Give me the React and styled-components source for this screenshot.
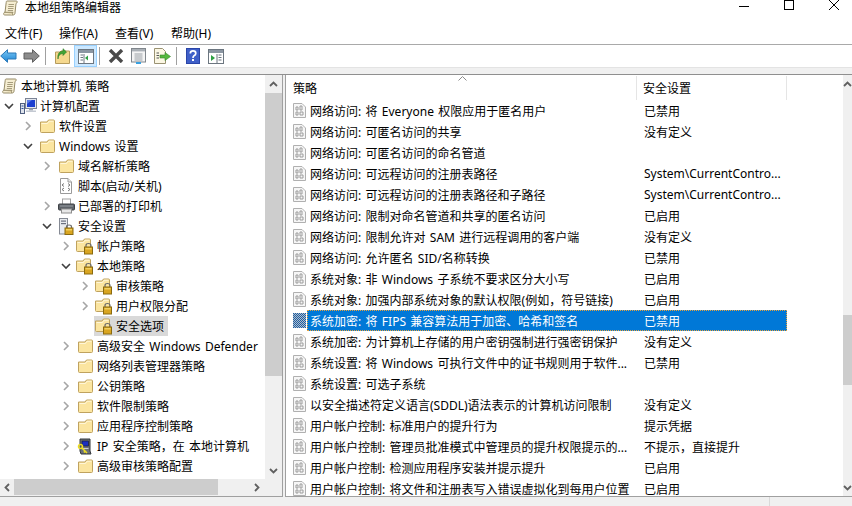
import React from 'react';
import styled, { createGlobalStyle } from 'styled-components';

const Global = createGlobalStyle`
    html, body {
        margin: 0;
        padding: 0;
        background: #fff;
    }
    * {
        box-sizing: border-box;
    }
`;

const Win = styled.div`
    width: 852px;
    height: 506px;
    overflow: hidden;
    display: flex;
    flex-direction: column;
    background: #fff;
    color: #000;
    font-family: 'Noto Sans', 'Noto Sans CJK SC', sans-serif;
    font-size: 12px;
    word-spacing: 1.2px;
`;

const TitleBar = styled.div`
    height: 15px;
    display: flex;
    align-items: center;
    padding-left: 3px;
    flex: none;
`;

const TitleText = styled.div`
    margin-left: 7px;
    line-height: 15px;
`;

const WinButtons = styled.div`
    margin-left: auto;
    display: flex;
    align-items: flex-start;
    height: 15px;
    padding-right: 13px;
    gap: 35px;
`;

const MenuBar = styled.div`
    flex: none;
    display: flex;
    align-items: center;
    padding: 6px 0 0 5px;
    border-bottom: 1px solid #a9a9a9;
    box-sizing: content-box;
    height: 23px;
`;

const MenuItem = styled.span`
    width: ${(p) => p.$w}px;
    white-space: nowrap;
`;

const Toolbar = styled.div`
    height: 22px;
    flex: none;
    display: flex;
    align-items: center;
`;

const Tool = styled.div`
    height: 22px;
    width: ${(p) => p.$w}px;
    margin-left: ${(p) => p.$ml || 0}px;
    display: flex;
    align-items: center;
    justify-content: center;
    background: ${(p) => (p.$on ? '#cce8ff' : 'transparent')};
    border: ${(p) => (p.$on ? '1px solid #99d1ff' : 'none')};
`;

const ToolSep = styled.div`
    width: 1px;
    height: 18px;
    margin-left: ${(p) => p.$ml || 0}px;
    background: #a0a0a0;
`;

const Band = styled.div`
    flex: none;
    background: #f0f0f0;
    border-top: 1px solid #e3e3e3;
    border-bottom: 1px solid #8f8f8f;
    box-sizing: content-box;
    height: 6px;
`;

const Panes = styled.div`
    flex: 1;
    min-height: 0;
    display: flex;
    background: #f0f0f0;
`;

const LeftPane = styled.div`
    width: 282px;
    flex: none;
    display: grid;
    grid-template-columns: 265px 17px;
    grid-template-rows: 404px 16px;
    height: 421px;
    background: #f0f0f0;
    border-right: 1px solid #a0a0a0;
    border-bottom: 1px solid #a0a0a0;
    box-sizing: content-box;
`;

const Tree = styled.div`
    overflow: hidden;
    background: #fff;
    padding-top: 1px;
`;

const TreeRow = styled.div`
    height: 20px;
    display: flex;
    align-items: center;
    padding-left: ${(p) => p.$level * 19}px;
    white-space: nowrap;
`;

const Caret = styled.div`
    width: 18px;
    height: 20px;
    flex: none;
    display: flex;
    align-items: center;
    justify-content: center;
`;

const TreeLabel = styled.div`
    display: flex;
    align-items: center;
    height: 20px;
    padding-right: 4px;
    background: ${(p) => (p.$sel ? '#d9d9d9' : 'transparent')};
`;

const TreeIcon = styled.div`
    width: ${(p) => p.$w || 20}px;
    height: 20px;
    margin-right: ${(p) => p.$mr || 2}px;
    flex: none;
    display: flex;
    align-items: center;
    justify-content: center;
`;

const VScroll = styled.div`
    background: #f0f0f0;
    display: flex;
    flex-direction: column;
    align-items: stretch;
    height: 100%;
`;

const ScrollArrow = styled.div`
    height: ${(p) => p.$h || 17}px;
    flex: none;
    display: flex;
    align-items: center;
    justify-content: center;
`;

const VThumb = styled.div`
    height: ${(p) => p.$h}px;
    margin-top: ${(p) => p.$top}px;
    flex: none;
    background: #cdcdcd;
`;

const Spacer = styled.div`
    flex: 1;
`;

const HScroll = styled.div`
    grid-column: 1 / 3;
    display: flex;
    align-items: stretch;
    background: #f0f0f0;
    padding-right: 19px;
`;

const HArrow = styled.div`
    width: 14px;
    flex: none;
    display: flex;
    align-items: center;
    justify-content: center;
`;

const HThumb = styled.div`
    width: 204px;
    flex: none;
    background: #cdcdcd;
`;

const Gap = styled.div`
    width: 2px;
    flex: none;
`;

const RightPane = styled.div`
    flex: 1;
    min-width: 0;
    height: 421px;
    display: flex;
    background: #fff;
    border-left: 1px solid #a0a0a0;
    border-bottom: 1px solid #a0a0a0;
    box-sizing: content-box;
`;

const ListArea = styled.div`
    flex: 1;
    min-width: 0;
    overflow: hidden;
`;

const HeaderRow = styled.div`
    position: relative;
    height: 25px;
    display: flex;
    align-items: center;
`;

const HeadCell = styled.div`
    width: ${(p) => p.$w}px;
    height: 24px;
    flex: none;
    padding-left: ${(p) => p.$pl}px;
    line-height: 26px;
    border-right: 1px solid #e5e5e5;
`;

const SortMark = styled.svg`
    position: absolute;
    left: 172px;
    top: 1px;
`;

const ListRow = styled.div`
    height: 21px;
    display: flex;
    align-items: center;
    white-space: nowrap;
`;

const RowIcon = styled.div`
    width: 21px;
    height: 21px;
    flex: none;
    display: flex;
    align-items: center;
    justify-content: flex-end;
    padding-right: 1px;
`;

const RowBody = styled.div`
    width: 480px;
    height: 21px;
    flex: none;
    display: flex;
    align-items: center;
    background: ${(p) => (p.$sel ? '#0078d7' : 'transparent')};
    color: ${(p) => (p.$sel ? '#fff' : '#000')};
    outline: ${(p) => (p.$sel ? '1px dotted #e8a33d' : 'none')};
    outline-offset: -1px;
`;

const PolicyCell = styled.div`
    width: 337px;
    flex: none;
    padding-left: 3px;
    overflow: hidden;
`;

const ValueCell = styled.div`
    flex: 1;
`;

const StatusBar = styled.div`
    flex: none;
    height: 9px;
    display: flex;
    justify-content: flex-end;
    background: #f0f0f0;
`;

const StatusCell = styled.div`
    width: 83px;
    border-left: 1px solid #d9d9d9;
`;

const Chevron = ({ open }) => (
    <svg width="10" height="10" viewBox="0 0 10 10">
        <path
            d={open ? 'M1 3 L5 7 L9 3' : 'M3 1 L7 5 L3 9'}
            fill="none"
            stroke={open ? '#404040' : '#a6a6a6'}
            strokeWidth="1.6"
        />
    </svg>
);

const ScrollChevron = ({ dir }) => {
    const paths = {
        up: 'M1 6 L4.5 2.5 L8 6',
        down: 'M1 3 L4.5 6.5 L8 3',
        left: 'M6 1 L2.5 4.5 L6 8',
        right: 'M3 1 L6.5 4.5 L3 8',
    };
    return (
        <svg width="9" height="9" viewBox="0 0 9 9">
            <path d={paths[dir]} fill="none" stroke="#606060" strokeWidth="1.8" />
        </svg>
    );
};

const ScrollIcon = () => (
    <svg width="15" height="16" viewBox="0 0 15 16">
        <path d="M4 1 H13.5 C14.5 1 14.5 3 13 3.5 L12 13 C12 14.5 11 15 10 15 H1.5 C.3 15 .3 12.3 2 12.3 L3.2 2.5 C3.3 1.5 3.5 1 4 1Z" fill="#f6eed2" stroke="#968b68" />
        <path d="M5.5 4.5 H11 M5.2 6.5 H10.7 M5 8.5 H10.5 M4.8 10.5 H10" stroke="#a69c7c" />
        <path d="M1.5 12.3 H10 C9 13.3 9.2 14.5 10 15" fill="#e8dcb4" stroke="#968b68" />
    </svg>
);

const ComputerIcon = () => (
    <svg width="17" height="16" viewBox="0 0 17 16">
        <rect x="5.5" y=".5" width="11" height="10" fill="#e3e7ee" stroke="#7c8496" />
        <rect x="7" y="2" width="8" height="7" fill="#1c3fd0" />
        <path d="M7 2 H12 L7 6Z" fill="#5c7ce8" />
        <rect x="9" y="10.5" width="4" height="2" fill="#9aa2b0" />
        <rect x="6" y="12.5" width="10" height="1.5" fill="#c4c9d2" />
        <rect x=".5" y="5.5" width="4" height="10" fill="#dfe4ec" stroke="#4f5f80" />
        <rect x="1.5" y="7.5" width="2" height="1" fill="#2a4fa0" />
        <rect x="1.5" y="10" width="2" height="1" fill="#2a4fa0" />
    </svg>
);

const FolderShape = () => (
    <>
        <path d="M.5 3 H7 L8.5 1 H13.5 Q14.5 1 14.5 2 V12.5 Q14.5 13.5 13.5 13.5 H1.5 Q.5 13.5 .5 12.5Z" fill="#fbe5a0" stroke="#bfa25e" />
        <path d="M1.5 4.5 H7.5 L9 2.2 H13.5" fill="none" stroke="#fff6d8" />
    </>
);

const Folder = () => (
    <svg width="15" height="14" viewBox="0 0 15 14">
        <FolderShape />
    </svg>
);

const LockFolder = () => (
    <svg width="18" height="17" viewBox="0 0 18 17">
        <FolderShape />
        <path d="M10 9 V7.5 Q10 5.5 12.5 5.5 Q15 5.5 15 7.5 V9" fill="none" stroke="#6b6b6b" strokeWidth="1.2" />
        <rect x="8.5" y="9" width="8" height="7" fill="#d9a520" stroke="#8a6a10" />
        <rect x="9.5" y="10" width="6" height="1.5" fill="#f2d060" />
    </svg>
);

const ScriptIcon = () => (
    <svg width="14" height="16" viewBox="0 0 14 16">
        <path d="M1.5 .5 H9 L12.5 4 V15.5 H1.5Z" fill="#fff" stroke="#9a9a9a" />
        <path d="M9 .5 V4 H12.5" fill="#eee" stroke="#9a9a9a" />
        <path d="M5 5.5 L3 7 L5 8.5 M9 5.5 L11 7 L9 8.5 M5 10 L3 11.5 L5 13 M9 10 L11 11.5 L9 13" fill="none" stroke="#777" />
    </svg>
);

const PrinterIcon = () => (
    <svg width="17" height="16" viewBox="0 0 17 16">
        <rect x="4.5" y="1" width="8" height="6" fill="#fff" stroke="#a0a0a0" />
        <rect x=".5" y="6" width="16" height="6" rx="1" fill="#5e6369" stroke="#3e4247" />
        <rect x="2" y="7.5" width="13" height="1" fill="#9aa0a6" />
        <rect x="3.5" y="11" width="10" height="4" fill="#e8e8e8" stroke="#8e8e8e" />
    </svg>
);

const SecurityIcon = () => (
    <svg width="16" height="17" viewBox="0 0 16 17">
        <rect x="1.5" y=".5" width="8" height="15.5" fill="#e8ebef" stroke="#858a94" />
        <rect x="3" y="2.5" width="5" height="1.2" fill="#6a7080" />
        <rect x="3" y="5" width="5" height="1.2" fill="#6a7080" />
        <path d="M8.5 10 V8.7 Q8.5 7 11 7 Q13.5 7 13.5 8.7 V10" fill="none" stroke="#6b6b6b" strokeWidth="1.2" />
        <rect x="7" y="10" width="8" height="6.5" fill="#d9a520" stroke="#8a6a10" />
        <rect x="8" y="11" width="6" height="1.5" fill="#f2d060" />
    </svg>
);

const IpIcon = () => (
    <svg width="16" height="17" viewBox="0 0 16 17">
        <path d="M3 1 H13 V13 L14 16 H4 L3 13Z" fill="#6b7078" stroke="#33363b" />
        <rect x="5" y="3" width="6.5" height="5" fill="#1a2fc0" stroke="#10141f" strokeWidth=".6" />
        <rect x="5" y="10" width="6.5" height="1" fill="#c8ccd2" />
        <circle cx="3.5" cy="8.5" r="2" fill="none" stroke="#ecdc20" strokeWidth="1.5" />
        <path d="M5 10 L10 15 M8 13 L7 14.5" stroke="#ecdc20" strokeWidth="1.6" fill="none" />
    </svg>
);

const PolicyIcon = ({ sel }) => (
    <svg width="13" height="15" viewBox="0 0 13 15">
        <defs>
            <pattern id="dither" width="2" height="2" patternUnits="userSpaceOnUse">
                <rect width="2" height="2" fill="#b4bcc6" />
                <rect width="1" height="1" fill="#1a5fa8" />
                <rect x="1" y="1" width="1" height="1" fill="#1a5fa8" />
            </pattern>
        </defs>
        <path d="M.5 .5 H9 L12.5 4 V14.5 H.5Z" fill="#f6f6f6" stroke="#b0b0b0" />
        <path d="M3 4 H5 V7 H3Z M7 3 H9 V7 H7Z M3 9 H5 V12 H3Z M7 9 H10 V12 H7Z" fill="none" stroke="#9c9c9c" />
        {sel && <rect width="13" height="15" fill="url(#dither)" />}
    </svg>
);

const BackIcon = () => (
    <svg width="17" height="14" viewBox="0 0 17 14">
        <defs>
            <linearGradient id="backFill" x1="0" y1="0" x2="0" y2="1">
                <stop offset="0" stopColor="#7cc8f5" />
                <stop offset="1" stopColor="#1c84d4" />
            </linearGradient>
        </defs>
        <path d="M.7 7 L7.5 .7 V4 H16 V10 H7.5 V13.3Z" fill="url(#backFill)" stroke="#2a78b8" />
    </svg>
);

const ForwardIcon = () => (
    <svg width="17" height="14" viewBox="0 0 17 14">
        <path d="M16.3 7 L9.5 .7 V4 H1 V10 H9.5 V13.3Z" fill="#8c8c8c" stroke="#5f5f5f" />
    </svg>
);

const UpFolderIcon = () => (
    <svg width="15" height="16" viewBox="0 0 15 16">
        <path d="M.5 4 H5 L6 3 H14.5 V15.5 H.5Z" fill="#f5d88e" stroke="#b59b5c" />
        <path d="M3 11 Q3 6 8 5.5 L8 7.5 L11.5 4 L8 .7 L8 3 Q2 3.5 3 11Z" fill="#3fa535" stroke="#2a7a22" strokeWidth=".6" />
    </svg>
);

const PaneIcon = ({ side }) => (
    <svg width="16" height="15" viewBox="0 0 16 15">
        <rect x=".5" y=".5" width="15" height="14" fill="#fff" stroke="#6c7680" />
        <rect x="1" y="1" width="14" height="3" fill="#8b96a2" />
        {side === 'left' ? (
            <>
                <path d="M2.5 6 H5 M2.5 8.5 H5 M2.5 11 H5" stroke="#6c7680" />
                <path d="M10 6.5 V11.5 L7 9Z" fill="#2ea043" />
                <path d="M6 5 V14" stroke="#6c7680" />
            </>
        ) : (
            <>
                <path d="M3 6 V12 L7 9Z" fill="#2ea043" />
                <path d="M10.5 6 H13.5 M10.5 8.5 H13.5 M10.5 11 H13.5" stroke="#6c7680" strokeWidth="1.2" />
                <path d="M9 5 V14" stroke="#6c7680" />
            </>
        )}
    </svg>
);

const DeleteIcon = () => (
    <svg width="16" height="14" viewBox="0 0 16 14">
        <path d="M2 1 L14 13 M14 1 L2 13" stroke="#4a4a4a" strokeWidth="3.4" />
    </svg>
);

const PropsIcon = () => (
    <svg width="15" height="16" viewBox="0 0 15 16">
        <rect x=".5" y=".5" width="14" height="13.5" fill="#f4f4f4" stroke="#80868c" />
        <rect x="1" y="1" width="13" height="2.4" fill="#aab0b6" />
        <path d="M3.5 6 H11.5 M3.5 8 H11.5 M3.5 10 H11.5 M3.5 12 H11.5" stroke="#9aa0a6" />
        <rect x="5" y="14" width="5" height="2" fill="#38a0e0" />
    </svg>
);

const ExportIcon = () => (
    <svg width="17" height="16" viewBox="0 0 17 16">
        <path d="M.5 .5 H8.5 L11.5 3.5 V15.5 H.5Z" fill="#fbf7e4" stroke="#9a9272" />
        <path d="M2.5 5 H5 M2.5 7.5 H5 M2.5 10 H5" stroke="#555" />
        <path d="M6 7 H11 V4.5 L16.5 8.5 L11 12.5 V10 H6Z" fill="#54b83e" stroke="#38862a" strokeWidth=".6" />
    </svg>
);

const HelpIcon = () => (
    <svg width="14" height="16" viewBox="0 0 14 16">
        <rect width="14" height="16" fill="#2a45a8" />
        <rect x="1" y="1" width="12" height="14" fill="#3f5fc8" />
        <path d="M4.3 5.5 Q4.3 2.8 7 2.8 Q9.8 2.8 9.8 5.2 Q9.8 6.8 8 7.8 Q7 8.4 7 10" fill="none" stroke="#fff" strokeWidth="1.7" />
        <rect x="6" y="11" width="2" height="2" fill="#fff" />
    </svg>
);

const iconFor = {
    folder: <Folder />,
    lock: <LockFolder />,
    computer: <ComputerIcon />,
    script: <ScriptIcon />,
    printer: <PrinterIcon />,
    security: <SecurityIcon />,
    ip: <IpIcon />,
};

const treeData = [
    { level: 1, caret: 'open', icon: 'computer', text: '计算机配置' },
    { level: 2, caret: 'closed', icon: 'folder', text: '软件设置' },
    { level: 2, caret: 'open', icon: 'folder', text: 'Windows 设置' },
    { level: 3, caret: 'closed', icon: 'folder', text: '域名解析策略' },
    { level: 3, icon: 'script', text: '脚本(启动/关机)' },
    { level: 3, caret: 'closed', icon: 'printer', text: '已部署的打印机' },
    { level: 3, caret: 'open', icon: 'security', text: '安全设置' },
    { level: 4, caret: 'closed', icon: 'lock', text: '帐户策略' },
    { level: 4, caret: 'open', icon: 'lock', text: '本地策略' },
    { level: 5, caret: 'closed', icon: 'lock', text: '审核策略' },
    { level: 5, caret: 'closed', icon: 'lock', text: '用户权限分配' },
    { level: 5, icon: 'lock', text: '安全选项', sel: true },
    { level: 4, caret: 'closed', icon: 'folder', text: '高级安全 Windows Defender' },
    { level: 4, icon: 'folder', text: '网络列表管理器策略' },
    { level: 4, caret: 'closed', icon: 'folder', text: '公钥策略' },
    { level: 4, caret: 'closed', icon: 'folder', text: '软件限制策略' },
    { level: 4, caret: 'closed', icon: 'folder', text: '应用程序控制策略' },
    { level: 4, caret: 'closed', icon: 'ip', text: 'IP 安全策略，在 本地计算机' },
    { level: 4, caret: 'closed', icon: 'folder', text: '高级审核策略配置' },
];

const rows = [
    ['网络访问: 将 Everyone 权限应用于匿名用户', '已禁用'],
    ['网络访问: 可匿名访问的共享', '没有定义'],
    ['网络访问: 可匿名访问的命名管道', ''],
    ['网络访问: 可远程访问的注册表路径', 'System\\CurrentContro...'],
    ['网络访问: 可远程访问的注册表路径和子路径', 'System\\CurrentContro...'],
    ['网络访问: 限制对命名管道和共享的匿名访问', '已启用'],
    ['网络访问: 限制允许对 SAM 进行远程调用的客户端', '没有定义'],
    ['网络访问: 允许匿名 SID/名称转换', '已禁用'],
    ['系统对象: 非 Windows 子系统不要求区分大小写', '已启用'],
    ['系统对象: 加强内部系统对象的默认权限(例如，符号链接)', '已启用'],
    ['系统加密: 将 FIPS 兼容算法用于加密、哈希和签名', '已禁用'],
    ['系统加密: 为计算机上存储的用户密钥强制进行强密钥保护', '没有定义'],
    ['系统设置: 将 Windows 可执行文件中的证书规则用于软件...', '已禁用'],
    ['系统设置: 可选子系统', ''],
    ['以安全描述符定义语言(SDDL)语法表示的计算机访问限制', '没有定义'],
    ['用户帐户控制: 标准用户的提升行为', '提示凭据'],
    ['用户帐户控制: 管理员批准模式中管理员的提升权限提示的...', '不提示，直接提升'],
    ['用户帐户控制: 检测应用程序安装并提示提升', '已启用'],
    ['用户帐户控制: 将文件和注册表写入错误虚拟化到每用户位置', '已启用'],
];

const App = () => {
    return (
        <Win>
            <Global />
            <TitleBar>
                <ScrollIcon />
                <TitleText>本地组策略编辑器</TitleText>
                <WinButtons>
                    <svg width="10" height="10" viewBox="0 0 10 10">
                        <path d="M0 6.5 H10" stroke="#000" />
                    </svg>
                    <svg width="10" height="10" viewBox="0 0 10 10">
                        <rect x=".5" y=".5" width="9" height="9" fill="none" stroke="#000" />
                    </svg>
                    <svg width="10" height="10" viewBox="0 0 10 10">
                        <path d="M0 0 L10 10 M10 0 L0 10" stroke="#000" />
                    </svg>
                </WinButtons>
            </TitleBar>
            <MenuBar>
                <MenuItem $w={54}>文件(F)</MenuItem>
                <MenuItem $w={56}>操作(A)</MenuItem>
                <MenuItem $w={56}>查看(V)</MenuItem>
                <MenuItem $w={56}>帮助(H)</MenuItem>
            </MenuBar>
            <Toolbar>
                <Tool $w={17}><BackIcon /></Tool>
                <Tool $w={17} $ml={6}><ForwardIcon /></Tool>
                <ToolSep $ml={5} />
                <Tool $w={15} $ml={9}><UpFolderIcon /></Tool>
                <Tool $w={23} $ml={4} $on><PaneIcon side="left" /></Tool>
                <ToolSep $ml={2} />
                <Tool $w={16} $ml={8}><DeleteIcon /></Tool>
                <Tool $w={15} $ml={7}><PropsIcon /></Tool>
                <Tool $w={17} $ml={8}><ExportIcon /></Tool>
                <ToolSep $ml={5} />
                <Tool $w={14} $ml={9}><HelpIcon /></Tool>
                <Tool $w={16} $ml={8}><PaneIcon side="right" /></Tool>
            </Toolbar>
            <Band />
            <Panes>
                <LeftPane>
                    <Tree>
                        <TreeRow $level={0}>
                            <TreeLabel>
                                <TreeIcon $w={18} $mr={3}><ScrollIcon /></TreeIcon>
                                本地计算机 策略
                            </TreeLabel>
                        </TreeRow>
                        {treeData.map((n) => (
                            <TreeRow key={n.text} $level={n.level - 1}>
                                <Caret>{n.caret && <Chevron open={n.caret === 'open'} />}</Caret>
                                <TreeLabel $sel={n.sel}>
                                    <TreeIcon>{iconFor[n.icon]}</TreeIcon>
                                    {n.text}
                                </TreeLabel>
                            </TreeRow>
                        ))}
                    </Tree>
                    <VScroll>
                        <ScrollArrow $h={18}><ScrollChevron dir="up" /></ScrollArrow>
                        <VThumb $top={0} $h={283} />
                        <Spacer />
                        <ScrollArrow><ScrollChevron dir="down" /></ScrollArrow>
                    </VScroll>
                    <HScroll>
                        <HArrow><ScrollChevron dir="left" /></HArrow>
                        <HThumb />
                        <Spacer />
                        <HArrow><ScrollChevron dir="right" /></HArrow>
                    </HScroll>
                </LeftPane>
                <Gap />
                <RightPane>
                    <ListArea>
                        <HeaderRow>
                            <HeadCell $w={351} $pl={7}>策略</HeadCell>
                            <HeadCell $w={150} $pl={6}>安全设置</HeadCell>
                            <SortMark width="9" height="5" viewBox="0 0 9 5">
                                <path d="M.5 4.5 L4.5 .5 L8.5 4.5" fill="none" stroke="#8a8a8a" />
                            </SortMark>
                        </HeaderRow>
                        {rows.map((r, i) => (
                            <ListRow key={r[0]}>
                                <RowIcon><PolicyIcon sel={i === 10} /></RowIcon>
                                <RowBody $sel={i === 10}>
                                    <PolicyCell>{r[0]}</PolicyCell>
                                    <ValueCell>{r[1]}</ValueCell>
                                </RowBody>
                            </ListRow>
                        ))}
                    </ListArea>
                    <VScroll>
                        <ScrollArrow $h={18}><ScrollChevron dir="up" /></ScrollArrow>
                        <VThumb $top={222} $h={70} />
                        <Spacer />
                        <ScrollArrow><ScrollChevron dir="down" /></ScrollArrow>
                    </VScroll>
                </RightPane>
            </Panes>
            <StatusBar>
                <StatusCell />
            </StatusBar>
        </Win>
    );
};

export default App;
